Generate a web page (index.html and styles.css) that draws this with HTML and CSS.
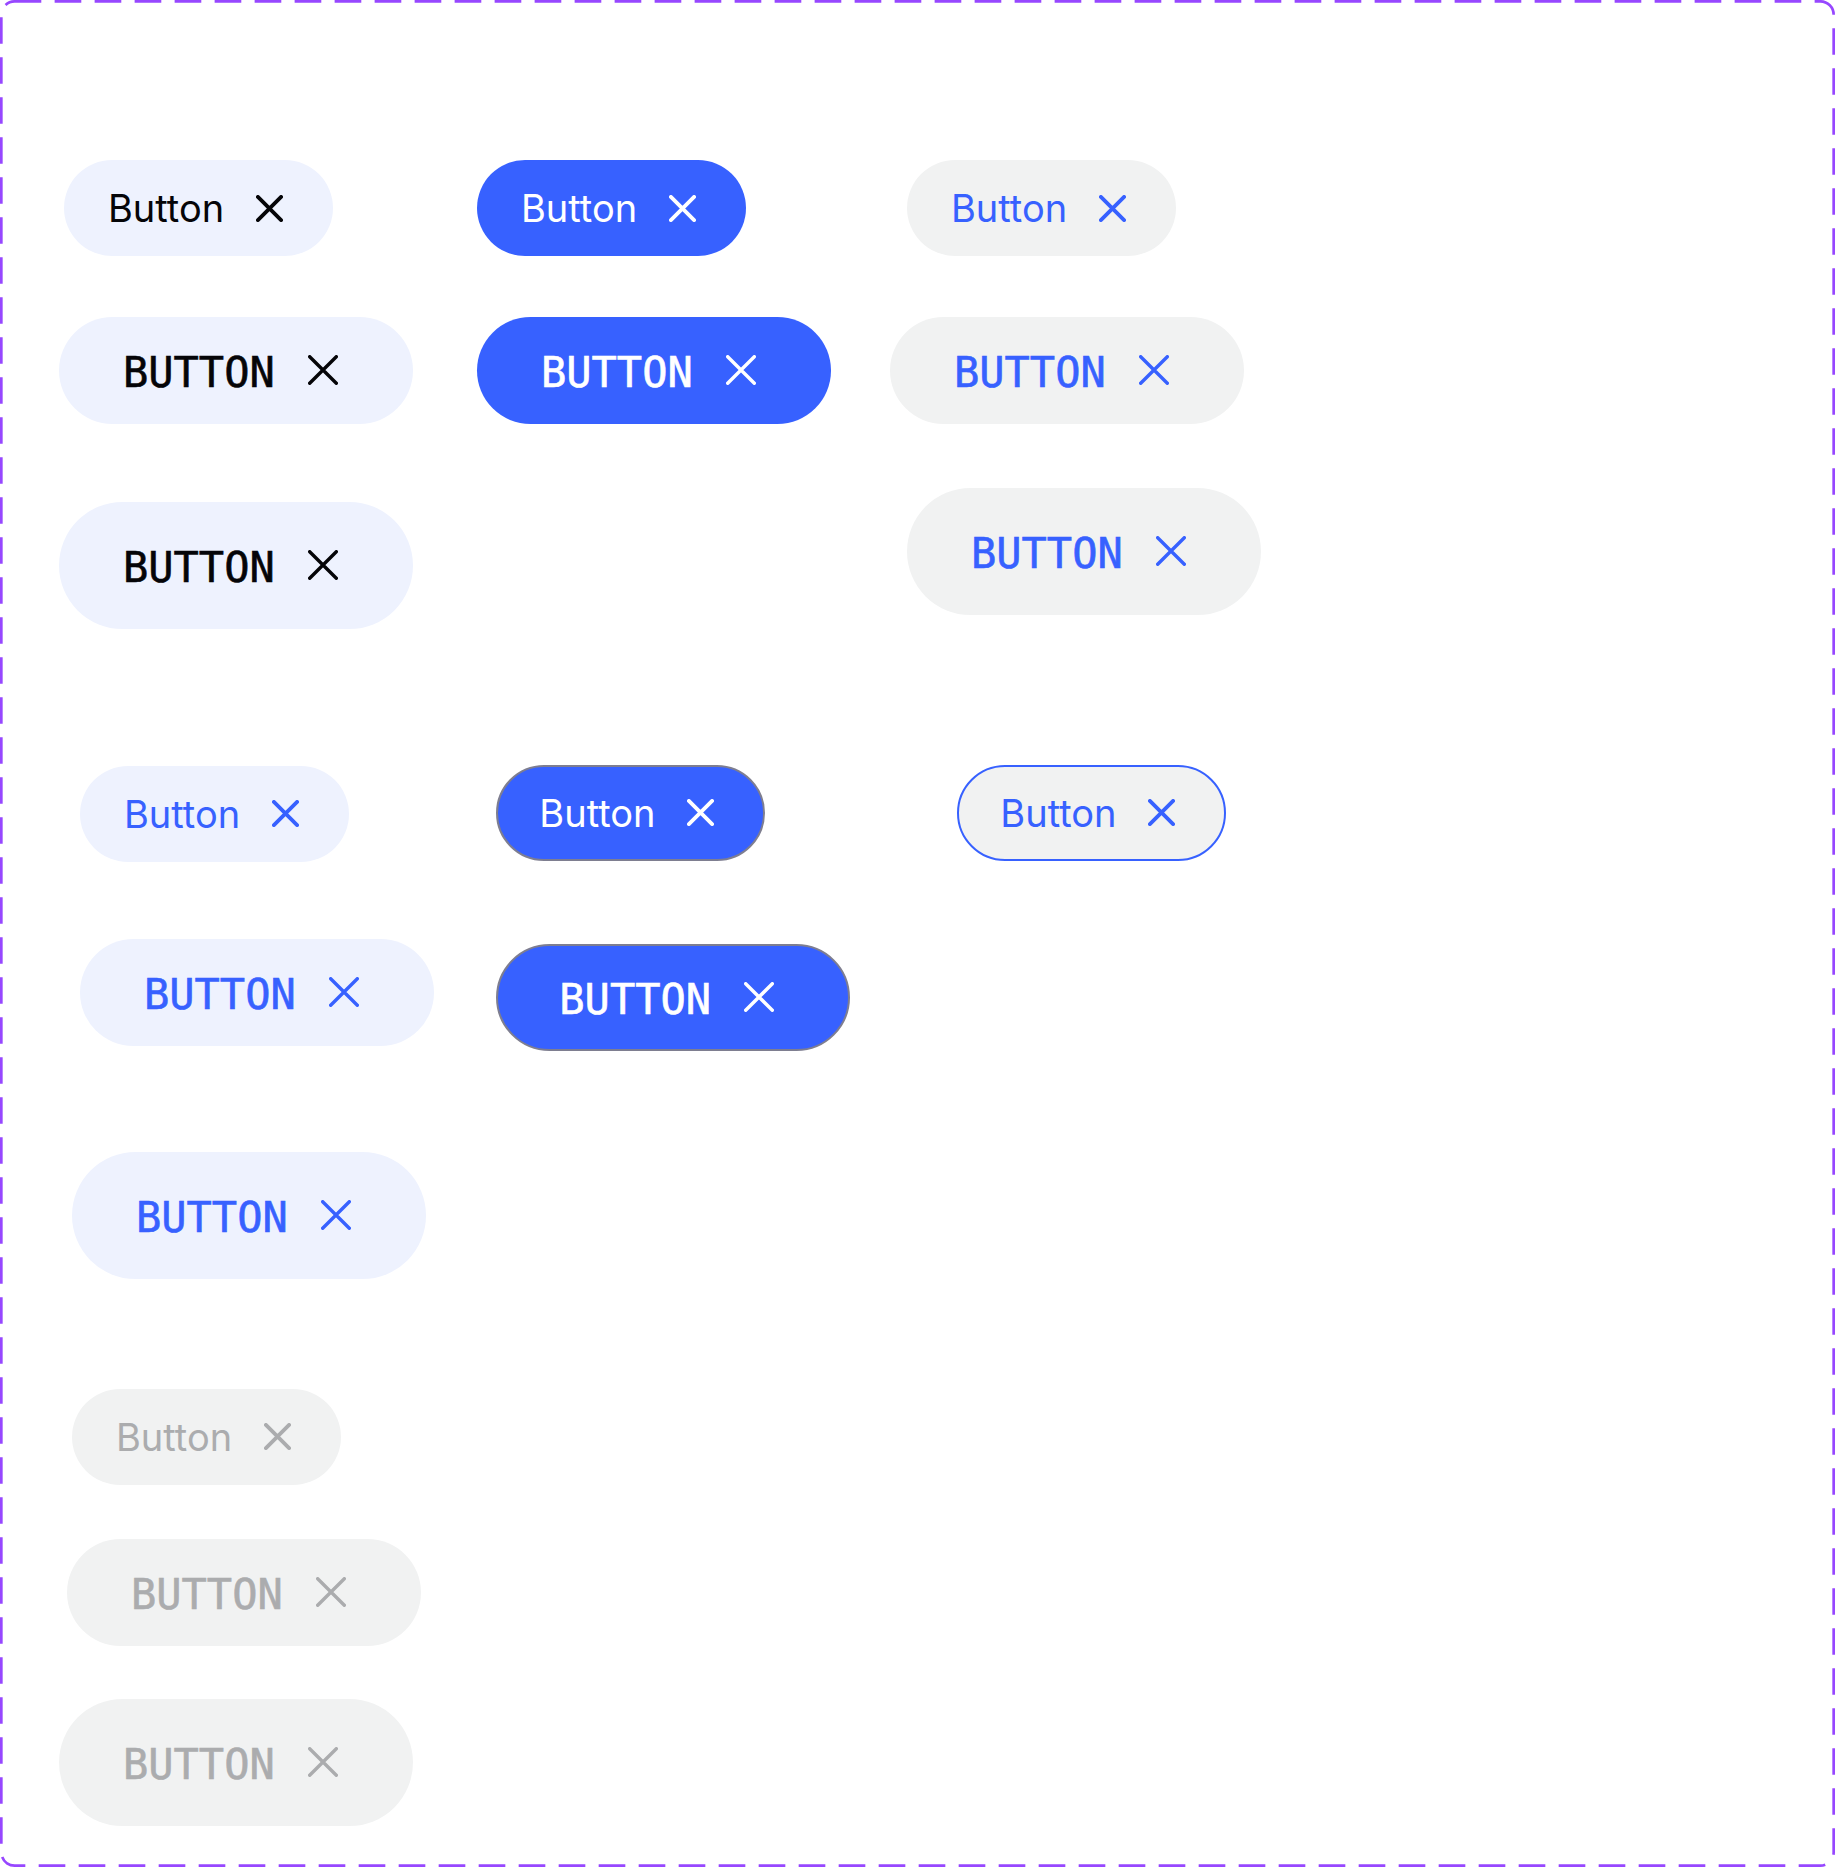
FILE: index.html
```html
<!DOCTYPE html>
<html lang="en">
<head>
<meta charset="utf-8">
<title>Chip variants</title>
<link rel="stylesheet" href="styles.css">
</head>
<body>
<div class="frame">
  <svg class="frame-border" width="1835" height="1867" viewBox="0 0 1835 1867" aria-hidden="true">
    <rect x="1.33" y="1.33" width="1832.33" height="1864.33" rx="13.3" ry="13.3" fill="none" stroke="#9747FF" stroke-width="2.67" stroke-dasharray="26.67 13.33"/>
  </svg>

  <div class="row r1">
    <div class="chip sm tint-dark a1"><span class="label">Button</span><svg class="x sm-x" viewBox="0 0 27 27"><path d="M1.9 1.9L25.1 25.1M25.1 1.9L1.9 25.1"/></svg></div>
    <div class="chip sm solid b1"><span class="label">Button</span><svg class="x sm-x" viewBox="0 0 27 27"><path d="M1.9 1.9L25.1 25.1M25.1 1.9L1.9 25.1"/></svg></div>
    <div class="chip sm gray c1"><span class="label">Button</span><svg class="x sm-x" viewBox="0 0 27 27"><path d="M1.9 1.9L25.1 25.1M25.1 1.9L1.9 25.1"/></svg></div>
  </div>

  <div class="row r2">
    <div class="chip md tint-dark a2"><span class="label mono">BUTTON</span><svg class="x md-x" viewBox="0 0 30 30"><path d="M1.7 1.7L28.3 28.3M28.3 1.7L1.7 28.3"/></svg></div>
    <div class="chip md solid b2"><span class="label mono">BUTTON</span><svg class="x md-x" viewBox="0 0 30 30"><path d="M1.7 1.7L28.3 28.3M28.3 1.7L1.7 28.3"/></svg></div>
    <div class="chip md gray c2"><span class="label mono">BUTTON</span><svg class="x md-x" viewBox="0 0 30 30"><path d="M1.7 1.7L28.3 28.3M28.3 1.7L1.7 28.3"/></svg></div>
  </div>

  <div class="row r3">
    <div class="chip lg tint-dark a3"><span class="label mono">BUTTON</span><svg class="x md-x" viewBox="0 0 30 30"><path d="M1.7 1.7L28.3 28.3M28.3 1.7L1.7 28.3"/></svg></div>
    <div class="chip lg gray c3"><span class="label mono">BUTTON</span><svg class="x md-x" viewBox="0 0 30 30"><path d="M1.7 1.7L28.3 28.3M28.3 1.7L1.7 28.3"/></svg></div>
  </div>

  <div class="row r4">
    <div class="chip sm tint a4"><span class="label">Button</span><svg class="x sm-x" viewBox="0 0 27 27"><path d="M1.9 1.9L25.1 25.1M25.1 1.9L1.9 25.1"/></svg></div>
    <div class="chip sm solid bordered b4"><span class="label">Button</span><svg class="x sm-x" viewBox="0 0 27 27"><path d="M1.9 1.9L25.1 25.1M25.1 1.9L1.9 25.1"/></svg></div>
    <div class="chip sm gray outlined c4"><span class="label">Button</span><svg class="x sm-x" viewBox="0 0 27 27"><path d="M1.9 1.9L25.1 25.1M25.1 1.9L1.9 25.1"/></svg></div>
  </div>

  <div class="row r5">
    <div class="chip md tint a5"><span class="label mono">BUTTON</span><svg class="x md-x" viewBox="0 0 30 30"><path d="M1.7 1.7L28.3 28.3M28.3 1.7L1.7 28.3"/></svg></div>
    <div class="chip md solid bordered b5"><span class="label mono">BUTTON</span><svg class="x md-x" viewBox="0 0 30 30"><path d="M1.7 1.7L28.3 28.3M28.3 1.7L1.7 28.3"/></svg></div>
  </div>

  <div class="row r6">
    <div class="chip lg tint a6"><span class="label mono">BUTTON</span><svg class="x md-x" viewBox="0 0 30 30"><path d="M1.7 1.7L28.3 28.3M28.3 1.7L1.7 28.3"/></svg></div>
  </div>

  <div class="row r7">
    <div class="chip sm disabled d1"><span class="label">Button</span><svg class="x sm-x" viewBox="0 0 27 27"><path d="M1.9 1.9L25.1 25.1M25.1 1.9L1.9 25.1"/></svg></div>
  </div>

  <div class="row r8">
    <div class="chip md disabled d2"><span class="label mono">BUTTON</span><svg class="x md-x" viewBox="0 0 30 30"><path d="M1.7 1.7L28.3 28.3M28.3 1.7L1.7 28.3"/></svg></div>
  </div>

  <div class="row r9">
    <div class="chip lg disabled d3"><span class="label mono">BUTTON</span><svg class="x md-x" viewBox="0 0 30 30"><path d="M1.7 1.7L28.3 28.3M28.3 1.7L1.7 28.3"/></svg></div>
  </div>
</div>
</body>
</html>
```

FILE: styles.css
```css
html, body {
  margin: 0;
  padding: 0;
  background: #ffffff;
}

.frame {
  position: relative;
  width: 1835px;
  height: 1867px;
  box-sizing: border-box;
  padding-top: 160px;
  display: flex;
  flex-direction: column;
  font-family: "Inter", "Noto Sans", sans-serif;
}

.frame-border {
  position: absolute;
  left: 0;
  top: 0;
  pointer-events: none;
}

.row {
  display: flex;
  align-items: flex-start;
}

.r2 { margin-top: 61px; }
.r3 { margin-top: 64.33px; }
.r4 { margin-top: 136px; }
.r5 { margin-top: 77px; }
.r6 { margin-top: 101.33px; }
.r7 { margin-top: 110px; }
.r8 { margin-top: 54px; }
.r9 { margin-top: 53.33px; }

/* chip base */
.chip {
  box-sizing: border-box;
  display: flex;
  align-items: center;
  flex: none;
  border-radius: 999px;
}

.chip.sm {
  width: 269px;
  height: 96px;
  padding-left: 44px;
  gap: 32px;
}

.chip.md {
  width: 354px;
  height: 106.67px;
  padding-left: 64px;
  gap: 33px;
}

.chip.lg {
  width: 354px;
  height: 127px;
  padding-left: 64px;
  gap: 33px;
}

.label {
  font-family: "Inter", "Noto Sans", sans-serif;
  font-size: 38px;
  font-weight: 400;
  line-height: 1;
  white-space: nowrap;
}

.label.mono {
  font-family: "DejaVu Sans Mono", "Liberation Mono", monospace;
  font-size: 42px;
  font-weight: 400;
  padding-top: 5px;
  -webkit-text-stroke: 0.6px currentColor;
}

.x {
  flex: none;
  fill: none;
  stroke: currentColor;
  stroke-linecap: round;
}
.sm-x { width: 27px; height: 27px; stroke-width: 3.8; }
.md-x { width: 30px; height: 30px; stroke-width: 3.4; }

/* colour variants */
.tint-dark { background: #eef2fe; color: #050508; }
.tint { background: #eef2fe; color: #3761ff; }
.solid { background: #3761ff; color: #ffffff; }
.gray { background: #f1f2f2; color: #3761ff; }
.disabled { background: #f1f2f2; color: #abacae; }

.bordered { border: 2.67px solid #7e7e90; }
.outlined { border: 2.67px solid #3761ff; }
.bordered.sm, .outlined.sm { padding-left: 41.33px; }
.bordered.md { padding-left: 61.33px; }

/* canvas placement of each variant */
.a1 { margin-left: 64px; }
.b1 { margin-left: 144px; }
.c1 { margin-left: 161px; }

.a2 { margin-left: 59px; }
.b2 { margin-left: 64px; }
.c2 { margin-left: 59px; }

.a3 { margin-left: 59px; margin-top: 14px; }
.c3 { margin-left: 494px; }

.a4 { margin-left: 80px; margin-top: 1px; }
.b4 { margin-left: 147px; }
.c4 { margin-left: 192px; }

.a5 { margin-left: 80px; }
.b5 { margin-left: 62px; margin-top: 5px; }

.a6 { margin-left: 72px; }
.d1 { margin-left: 72px; }
.d2 { margin-left: 67px; }
.d3 { margin-left: 59px; }
```
